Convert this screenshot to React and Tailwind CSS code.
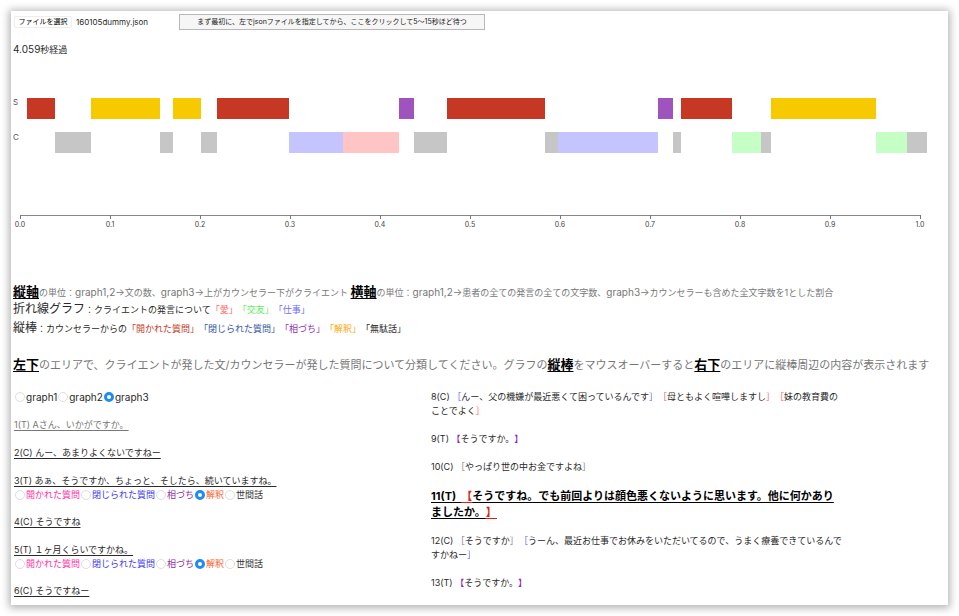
const BARS = {
  S: [
    [16, 44, '#c63823'], [80, 149, '#f7ca00'], [162, 190, '#f7ca00'], [206, 278, '#c63823'],
    [388, 403, '#9f54bd'], [436, 534, '#c63823'], [647, 662, '#9f54bd'], [670, 721, '#c63823'],
    [760, 865, '#f7ca00'],
  ],
  C: [
    [44, 80, '#c6c6c6'], [149, 162, '#c6c6c6'], [190, 206, '#c6c6c6'], [278, 332, '#c5c4ff'],
    [332, 388, '#ffc5c4'], [403, 436, '#c6c6c6'], [534, 547, '#c6c6c6'], [547, 647, '#c5c4ff'],
    [662, 670, '#c6c6c6'], [721, 750, '#c5ffc5'], [750, 760, '#c6c6c6'], [865, 896, '#c5ffc5'],
    [896, 916, '#c6c6c6'],
  ],
};

const TICKS = ['0.0', '0.1', '0.2', '0.3', '0.4', '0.5', '0.6', '0.7', '0.8', '0.9', '1.0'];

const CATEGORIES = [
  ['開かれた質問', 'text-[#ff2fa8]'],
  ['閉じられた質問', 'text-[#4038f0]'],
  ['相づち', 'text-[#8a2fa0]'],
  ['解釈', 'text-[#ff5a1f]'],
  ['世間話', 'text-[#333333]'],
];

function Chart() {
  return (
    <svg viewBox="0 0 937 226" className="block h-auto w-full" role="img" aria-label="graph3">
      <text x="2" y="49" fontSize="8" fill="#555">S</text>
      <text x="2" y="84" fontSize="8" fill="#555">C</text>
      {BARS.S.map(([a, b, color]) => (
        <rect key={a} x={a} y="42" width={b - a} height="21" fill={color} />
      ))}
      {BARS.C.map(([a, b, color]) => (
        <rect key={a} x={a} y="76" width={b - a} height="21" fill={color} />
      ))}
      <rect x="9" y="159" width="900" height="1" fill="#888" />
      {TICKS.map((label, i) => (
        <g key={label}>
          <rect x={9 + i * 90} y="159" width="1" height="4" fill="#777" />
          <text x={9 + i * 90} y="171" fontSize="7" textAnchor="middle" fill="#444">{label}</text>
        </g>
      ))}
    </svg>
  );
}

function Radio({ name, label, color, checked }) {
  return (
    <label className={`flex items-center ${color}`}>
      <input
        type="radio"
        name={name}
        defaultChecked={checked}
        className="mx-px size-[10px] appearance-none rounded-full border border-[#dedede] bg-white checked:border-[3px] checked:border-[#1e8cf5]"
      />
      {label}
    </label>
  );
}

function Utterance({ children, name, light }) {
  return (
    <div>
      <p className={`underline underline-offset-2 ${light ? 'text-[#777777]' : ''}`}>{children}</p>
      {name && (
        <div className="flex h-[13px] items-center">
          {CATEGORIES.map(([label, color]) => (
            <Radio key={label} name={name} label={label} color={color} checked={label === '解釈'} />
          ))}
        </div>
      )}
    </div>
  );
}

function Key({ children }) {
  return <b className="text-[13px] font-bold text-black underline underline-offset-2">{children}</b>;
}

function Latin({ children }) {
  return <span className="text-[10px]">{children}</span>;
}

function Bracket({ color, heavy, children }) {
  return (
    <>
      <span className={color}>{heavy ? '【' : '［'}</span>
      {children}
      <span className={color}>{heavy ? '】' : '］'}</span>
    </>
  );
}

export default function App() {
  return (
    <div className="bg-white p-[11px]">
      <main
        lang="ja"
        className="bg-white px-[2px] pt-[3px] pb-[7px] font-[Inter,'Noto_Sans_CJK_JP',sans-serif] text-[9px] leading-[14px] text-[#2a2a2a] shadow-[0_1px_8px_2px_rgba(0,0,0,0.3)] [text-spacing-trim:space-all]"
      >
        <div className="flex h-4 items-center pl-px">
          <button type="button" className="h-3 w-[58px] rounded-xs border border-[#eeeeee] bg-white text-[7px] leading-[10px] text-black">
            ファイルを選択
          </button>
          <span className="ml-1 w-[103px] text-[8px]">160105dummy.json</span>
          <button type="button" className="h-4 w-[306px] border border-[#b8b8b8] bg-[#f6f6f6] text-[7px] leading-[14px] whitespace-nowrap text-[#222222]">
            まず最初に、左でjsonファイルを指定してから、ここをクリックして5〜15秒ほど待つ
          </button>
        </div>
        <p className="mt-3 h-[14px]"><Latin>4.059</Latin>秒経過</p>

        <div className="-mx-[2px]">
          <Chart />
        </div>

        <div className="leading-[18px]">
          <p className="h-[18px] whitespace-nowrap text-[#777777]">
            <Key>縦軸</Key>の単位：<Latin>graph1,2→</Latin>文の数、<Latin>graph3→</Latin>上がカウンセラー下がクライエント <Key>横軸</Key>
            の単位：<Latin>graph1,2→</Latin>患者の全ての発言の全ての文字数、<Latin>graph3→</Latin>カウンセラーも含めた全文字数を1とした割合
          </p>
          <p>
            <span className="text-[12px]">折れ線グラフ</span>：クライエントの発言について
            <span className="text-[#ff6b6b]">「愛」</span>
            <span className="text-[#5cf05c]">「交友」</span>
            <span className="text-[#6b6bff]">「仕事」</span>
          </p>
          <p>
            <span className="text-[12px]">縦棒</span>：カウンセラーからの
            <span className="text-[#c63823]">「開かれた質問」</span>
            <span className="text-[#2f55a4]">「閉じられた質問」</span>
            <span className="text-[#8e2fb0]">「相づち」</span>
            <span className="text-[#ffa500]">「解釈」</span>
            「無駄話」
          </p>
          <p className="mt-[17px] text-[11px] text-[#777777]">
            <Key>左下</Key>のエリアで、クライエントが発した文/カウンセラーが発した質問について分類してください。グラフの
            <Key>縦棒</Key>をマウスオーバーすると<Key>右下</Key>のエリアに縦棒周辺の内容が表示されます
          </p>
        </div>

        <div className="mt-4 grid grid-cols-[417fr_515fr] pl-px">
          <div className="flex flex-col gap-[14px]">
            <div className="flex h-[14px] items-center text-[10px]">
              <Radio name="graph" label="graph1" />
              <Radio name="graph" label="graph2" />
              <Radio name="graph" label="graph3" checked />
            </div>
            <Utterance light>1(T) Aさん、いかがですか。</Utterance>
            <Utterance>2(C) んー、あまりよくないですねー</Utterance>
            <Utterance name="u3">3(T) あぁ、そうですか、ちょっと、そしたら、続いていますね。</Utterance>
            <Utterance>4(C) そうですね</Utterance>
            <Utterance name="u5">5(T) １ヶ月くらいですかね。</Utterance>
            <Utterance>6(C) そうですねー</Utterance>
          </div>
          <div className="flex max-w-[420px] flex-col gap-[14px]">
            <p>
              8(C) <Bracket color="text-[#5c5cff]">んー、父の機嫌が最近悪くて困っているんです</Bracket>
              <Bracket color="text-[#ff5c5c]">母ともよく喧嘩しますし</Bracket>
              <Bracket color="text-[#ff5c5c]">妹の教育費の<br />ことでよく</Bracket>
            </p>
            <p>9(T) <Bracket heavy color="text-[#9020c0]">そうですか。</Bracket></p>
            <p>10(C) <Bracket color="text-[#777777]">やっぱり世の中お金ですよね</Bracket></p>
            <p className="text-[11px] leading-[16px] font-bold text-black underline underline-offset-2">
              11(T)&nbsp; <Bracket heavy color="text-[#e02010] underline">そうですね。でも前回よりは顔色悪くないように思います。他に何かあり<br />ましたか。</Bracket>
            </p>
            <p>
              12(C) <Bracket color="text-[#777777]">そうですか</Bracket>
              <Bracket color="text-[#5c5cff]">うーん、最近お仕事でお休みをいただいてるので、うまく療養できているんで<br />すかねー</Bracket>
            </p>
            <p>13(T) <Bracket heavy color="text-[#9020c0]">そうですか。</Bracket></p>
          </div>
        </div>
      </main>
    </div>
  );
}
